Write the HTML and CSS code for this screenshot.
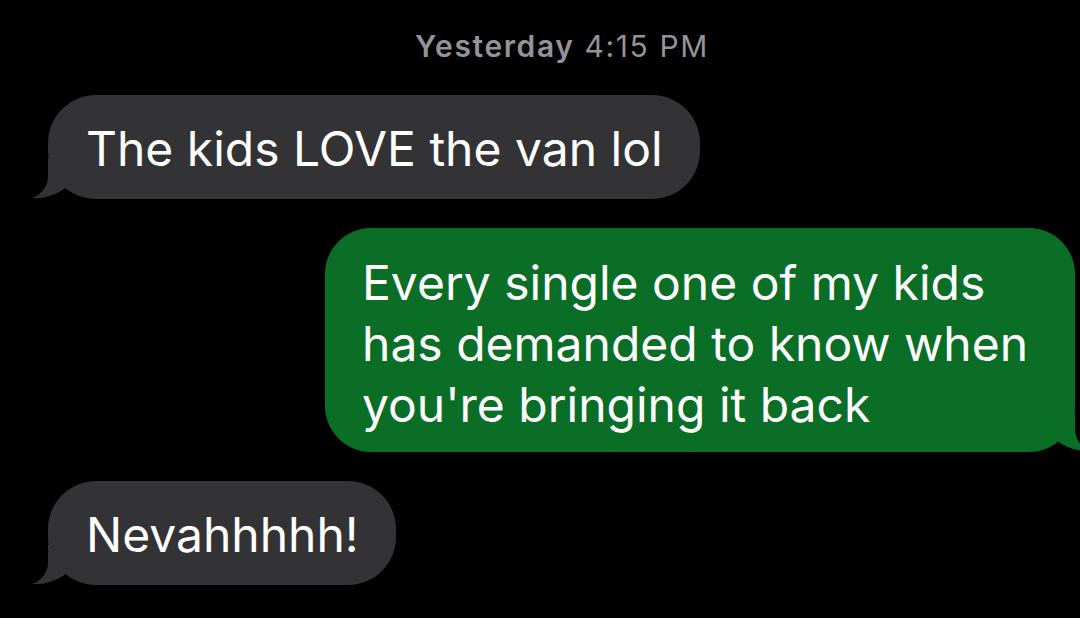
FILE: index.html
```html
<!DOCTYPE html>
<html lang="en">
<head>
    <meta charset="UTF-8">
    <meta name="viewport" content="width=device-width, initial-scale=1.0">
    <title>Messages</title>
    <link rel="stylesheet" href="styles.css">
</head>
<body>
    <div class="chat">
        <div class="stamp"><b>Yesterday</b> 4:15 PM</div>

        <div class="row in">
            <div class="bubble gray">
                The kids LOVE the van lol
                <svg class="tail tail-left" width="40" height="40" viewBox="0 0 40 40"><path d="M17 0 L17 17 C17 28 10 36 1 39 C12 40 26 36 36 28 L36 0 Z" fill="#333335"/></svg>
            </div>
        </div>

        <div class="row out">
            <div class="bubble green">
                Every single one of my kids has demanded to know when you're bringing it back
                <svg class="tail tail-right" width="40" height="40" viewBox="0 0 40 40"><path d="M23 0 L23 17 C23 28 30 36 39 39 C28 40 14 36 4 28 L4 0 Z" fill="#0b6e27"/></svg>
            </div>
        </div>

        <div class="row in">
            <div class="bubble gray">
                Nevahhhhh!
                <svg class="tail tail-left" width="40" height="40" viewBox="0 0 40 40"><path d="M17 0 L17 17 C17 28 10 36 1 39 C12 40 26 36 36 28 L36 0 Z" fill="#333335"/></svg>
            </div>
        </div>
    </div>
</body>
</html>
```

FILE: styles.css
```css
body {
    background: #000;
    margin: 0;
    padding: 0;
    font-family: Inter, "Liberation Sans", sans-serif;
    overflow: hidden;
}

.chat {
    display: flex;
    flex-direction: column;
    gap: 29px;
    padding: 28px 0 0 48px;
}

.stamp {
    color: #939398;
    font-size: 30px;
    line-height: 36px;
    letter-spacing: 1.6px;
    text-align: center;
    padding-right: 4px;
    margin-bottom: 2px;
}

.stamp b {
    font-weight: 600;
}

.row {
    display: flex;
}

.row.out {
    justify-content: flex-end;
    padding-right: 5px;
}

.bubble {
    position: relative;
    color: #fff;
    font-size: 48px;
    line-height: 61px;
    padding: 23px 37px 20px 38px;
    border-radius: 48px;
}

.gray {
    background-color: #333335;
}

.green {
    background-color: #0b6e27;
    width: 676px;
    padding: 24px 37px 17px 37px;
    border-radius: 46px;
}

.tail {
    position: absolute;
    bottom: 0;
}

.tail-left {
    left: -17px;
}

.tail-right {
    right: -17px;
}
```
